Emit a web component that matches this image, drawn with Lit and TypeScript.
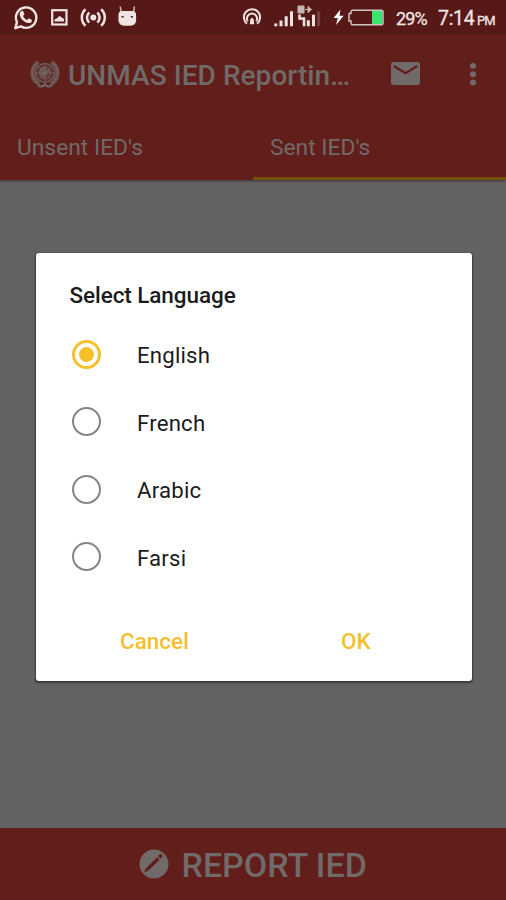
import { LitElement, html, css, svg } from "lit";
import { customElement, state } from "lit/decorators.js";
import { classMap } from "lit/directives/class-map.js";

const LEAVES = [0, 1, 2, 3, 4, 5, 6];

@customElement("status-bar")
class StatusBar extends LitElement {
  static styles = css`
    :host { display: block; height: 34px; background: #561917; color: #f0e4e2; }
    .bar { display: flex; height: 34px; align-items: center; }
    svg { display: block; flex: none; }
    .left { width: 150px; }
    .right { margin-left: 80px; width: 160px; }
    .pct { font-size: 18px; margin-left: 6px; width: 42px; letter-spacing: -0.9px; padding-top: 2px; -webkit-text-stroke: .3px currentColor; }
    .time { font-size: 19.5px; letter-spacing: -.3px; padding-top: 2px; white-space: nowrap; -webkit-text-stroke: .3px currentColor; }
    .pm { font-size: 13px; margin-left: 2.5px; letter-spacing: -0.8px; }
  `;
  render() {
    return html`<div class="bar">
      <svg class="left" width="150" height="34" viewBox="0 0 150 34" fill="none" stroke="#f0e4e2">
        <path d="M15.300 28.200l1.700-6A10.200 10.200 0 1 1 20.900 26.400z" stroke-width="2.400" stroke-linejoin="round"/>
        <path d="M20.800 11.300l2.200-.5 1.500 3.400-1.500 1.700c.9 2 2.200 3.200 4.200 4l1.600-1.700 3.200 1.700c0 2.200-1.500 3.400-3.600 3.200-4.500-.8-8.400-4.800-8.700-8.900 0-1.200.4-2.200 1.100-2.900z" fill="#f0e4e2" stroke="none"/>
        <rect x="52.200" y="10.200" width="14.300" height="14.300" stroke-width="2.200"/>
        <path d="M54.500 21.500v-2l3-1.500 2-2.200 1.500 1.200 3 2v2.500z" fill="#f0e4e2" stroke="none"/>
        <circle cx="93.300" cy="17.500" r="3" fill="#f0e4e2" stroke="none"/>
        <path d="M89.300 12.500a6.600 6.600 0 0 0 0 10M97.300 12.500a6.600 6.600 0 0 1 0 10M85.500 9.300a11 11 0 0 0 0 16.400M101.100 9.300a11 11 0 0 1 0 16.400" stroke-width="2.500"/>
        <path d="M120.200 6.500l.9 5.500M134.400 6.500l-.9 5.500" stroke-width="1.500" opacity=".8"/>
        <path d="M118.500 14q.5-3 3.500-3h10.500q3 0 3.500 3l.2 6q-.2 5.700-6 5.700h-5.800q-5.800 0-6-5.700z" fill="#f0e4e2" stroke="none"/>
        <path d="M121.500 16.800h2.200M130.800 16.800h2.200" stroke="#561917" stroke-width="1.600"/>
      </svg>
      <svg class="right" width="160" height="34" viewBox="230 0 160 34" fill="none" stroke="#f0e4e2">
        <path d="M247 23.600a8.100 8.100 0 1 1 10 0" stroke-width="2"/>
        <path d="M247.800 21.300a5 5 0 1 1 8.400 0" stroke-width="1.900"/>
        <path d="M249.800 24.300l.6-5.300q1.600-2.200 3.200 0l.6 5.300z" fill="#f0e4e2" stroke="none"/>
        <g stroke-width="3">
          <path d="M275.800 26.200v-2.700M281 26.200v-5.700M286.200 26.200v-10M291.500 26.200v-15"/>
          <path d="M308.300 26.200v-6M313.500 26.200v-11.500"/>
          <path d="M318.600 26.200v-14.700" stroke="#76413d"/>
        </g>
        <path d="M298 6h6v7h-6zM305 9.500h6M308 6.500l3.500 3-3.500 3z" fill="#c6b7b4" stroke="#c6b7b4" stroke-width="1"/>
        <path d="M299.500 14.500v4h4.500v7.700" stroke-width="2.500"/>
        <path d="M340.500 9.500l-7 8.600h4.200l-1.600 6.900 7.600-9.200h-4.200z" fill="#fff" stroke="none"/>
        <path d="M352.500 10.200h29q1.500 0 1.500 1.500v11.600q0 1.500-1.500 1.500h-29q-1.500 0-1.500-1.500v-2.300h-2v-7.500h2v-1.800q0-1.500 1.500-1.500z" stroke="#cfc3c1" stroke-width="1.500"/>
        <path d="M372 11h10v13h-10z" fill="#39e66f" stroke="none"/>
      </svg>
      <span class="pct">29%</span>
      <span class="time">7:14<span class="pm">PM</span></span>
    </div>`;
  }
}

@customElement("app-header")
class AppHeader extends LitElement {
  static styles = css`
    :host { display: block; height: 146px; background: #611e1b; color: #706a69; box-shadow: 0 1px 3px #3b3333; }
    .bar { height: 81px; display: flex; align-items: center; padding-left: 29px; box-sizing: border-box; }
    svg { display: block; flex: none; }
    .title { margin-left: 7px; width: 323px; font-size: 28px; font-weight: 500; letter-spacing: .05px; white-space: nowrap; padding-top: 2px; }
    .tabs { display: flex; height: 65px; }
    .tab { flex: 1; box-sizing: border-box; padding: 18px 0 0 17px; font-size: 22.8px; line-height: 30px; }
    .tab.active { border-bottom: 3px solid #74500a; }
    .menu { margin-left: 46px; }
  `;
  render() {
    return html`
      <div class="bar">
        <svg width="32" height="30" viewBox="0 0 32 30" fill="none" stroke="#706a69">
          <circle cx="16" cy="13" r="9.500" stroke-width="1.100" fill="#706a69" fill-opacity=".25"/>
          <circle cx="16" cy="13" r="5.500" stroke-width=".8"/>
          <path d="M6.500 13h19M16 3.500v19M9.300 6.300l13.400 13.400M22.700 6.300L9.300 19.700" stroke-width=".7"/>
          <path d="M12 8l4-2 1 4 4-1-1 4-3 1-1 4-4-2-2-4z" fill="#706a69" stroke="none" opacity=".7"/>
          ${LEAVES.map((i) => svg`
            <ellipse cx="3.500" cy="13" rx="2.200" ry="2.900" fill="#706a69" fill-opacity=".7" stroke="none" transform=${`rotate(${48 - i * 17} 16 13)`}/>
            <ellipse cx="28.500" cy="13" rx="2.200" ry="2.900" fill="#706a69" fill-opacity=".7" stroke="none" transform=${`rotate(${-48 + i * 17} 16 13)`}/>`)}
          <path d="M9 25.500q4 2.500 7-1 3 3.500 7 1" stroke-width="2"/>
        </svg>
        <span class="title">UNMAS IED Reportin…</span>
        <svg width="32" height="26" viewBox="0 0 32 26">
          <rect x="0" y="0" width="29" height="23" rx="2.500" fill="#706a69"/>
          <path d="M2.800 4l11.700 7.200L26.200 4" fill="none" stroke="#611e1b" stroke-width="2.200"/>
        </svg>
        <svg class="menu" width="8" height="26" viewBox="0 0 8 26" fill="#706a69">
          <circle cx="4" cy="4" r="3"/><circle cx="4" cy="12.300" r="3"/><circle cx="4" cy="20.600" r="3"/>
        </svg>
      </div>
      <div class="tabs">
        <div class="tab">Unsent IED's</div>
        <div class="tab active">Sent IED's</div>
      </div>`;
  }
}

@customElement("language-dialog")
class LanguageDialog extends LitElement {
  @state() selected = "English";
  static styles = css`
    :host { display: block; width: 436.5px; height: 427.5px; background: #fff; border-radius: 3px; color: #1c1c1c; box-shadow: 0 1px 2px 1px #383737; }
    .title { padding: 27px 0 0 34px; font-size: 22.5px; line-height: 30px; font-weight: 500; letter-spacing: -.08px; }
    .list { padding-top: 10.5px; }
    .row { height: 67.5px; display: flex; align-items: center; padding-left: 36px; font-size: 22.2px; letter-spacing: .2px; }
    .label { padding-top: 1.5px; }
    .radio { width: 29px; height: 29px; box-sizing: border-box; border: 2.5px solid #858585; border-radius: 50%; display: grid; place-items: center; margin-right: 36.5px; }
    .radio.on { border: 3px solid #f6c02b; }
    .radio.on::after { content: ""; width: 15px; height: 15px; border-radius: 50%; background: #f6c02b; }
    .actions { display: flex; color: #f4bf2b; font-size: 22.5px; font-weight: 500; line-height: 30px; padding: 35.5px 0 0 84.5px; }
    .cancel { width: 221px; }
  `;
  render() {
    return html`
      <div class="title">Select Language</div>
      <div class="list">
        ${["English", "French", "Arabic", "Farsi"].map((name) => html`
          <div class="row" @click=${() => (this.selected = name)}>
            <span class=${classMap({ radio: true, on: name === this.selected })}></span>
            <span class="label">${name}</span>
          </div>`)}
      </div>
      <div class="actions"><span class="cancel">Cancel</span><span>OK</span></div>`;
  }
}

@customElement("app-root")
class AppRoot extends LitElement {
  static styles = css`
    :host { display: flex; flex-direction: column; width: 506px; height: 900px; background: #656263; font-family: Roboto, sans-serif; overflow: hidden; }
    .content { flex: 1; padding: 73px 0 0 35.5px; box-sizing: border-box; }
    .report { height: 72px; background: #611e1b; color: #706a69; display: flex; align-items: center; padding-left: 139px; font-size: 34px; font-weight: 500; }
    .report svg { margin-right: 12.5px; }
    .report span { padding-top: 1px; }
  `;
  render() {
    return html`
      <status-bar></status-bar>
      <app-header></app-header>
      <div class="content"><language-dialog></language-dialog></div>
      <div class="report">
        <svg width="30" height="30" viewBox="0 0 30 30">
          <circle cx="15" cy="15" r="14.500" fill="#706a69"/>
          <path d="M5 23.500l1.800-4L18 8.300l2.500 2.500L9.200 21.800zM19 7l1.500-1.500q1.200-1 2.300.2t.3 2.300L21.500 9.500z" fill="#611e1b"/>
        </svg>
        <span>REPORT IED</span>
      </div>`;
  }
}
